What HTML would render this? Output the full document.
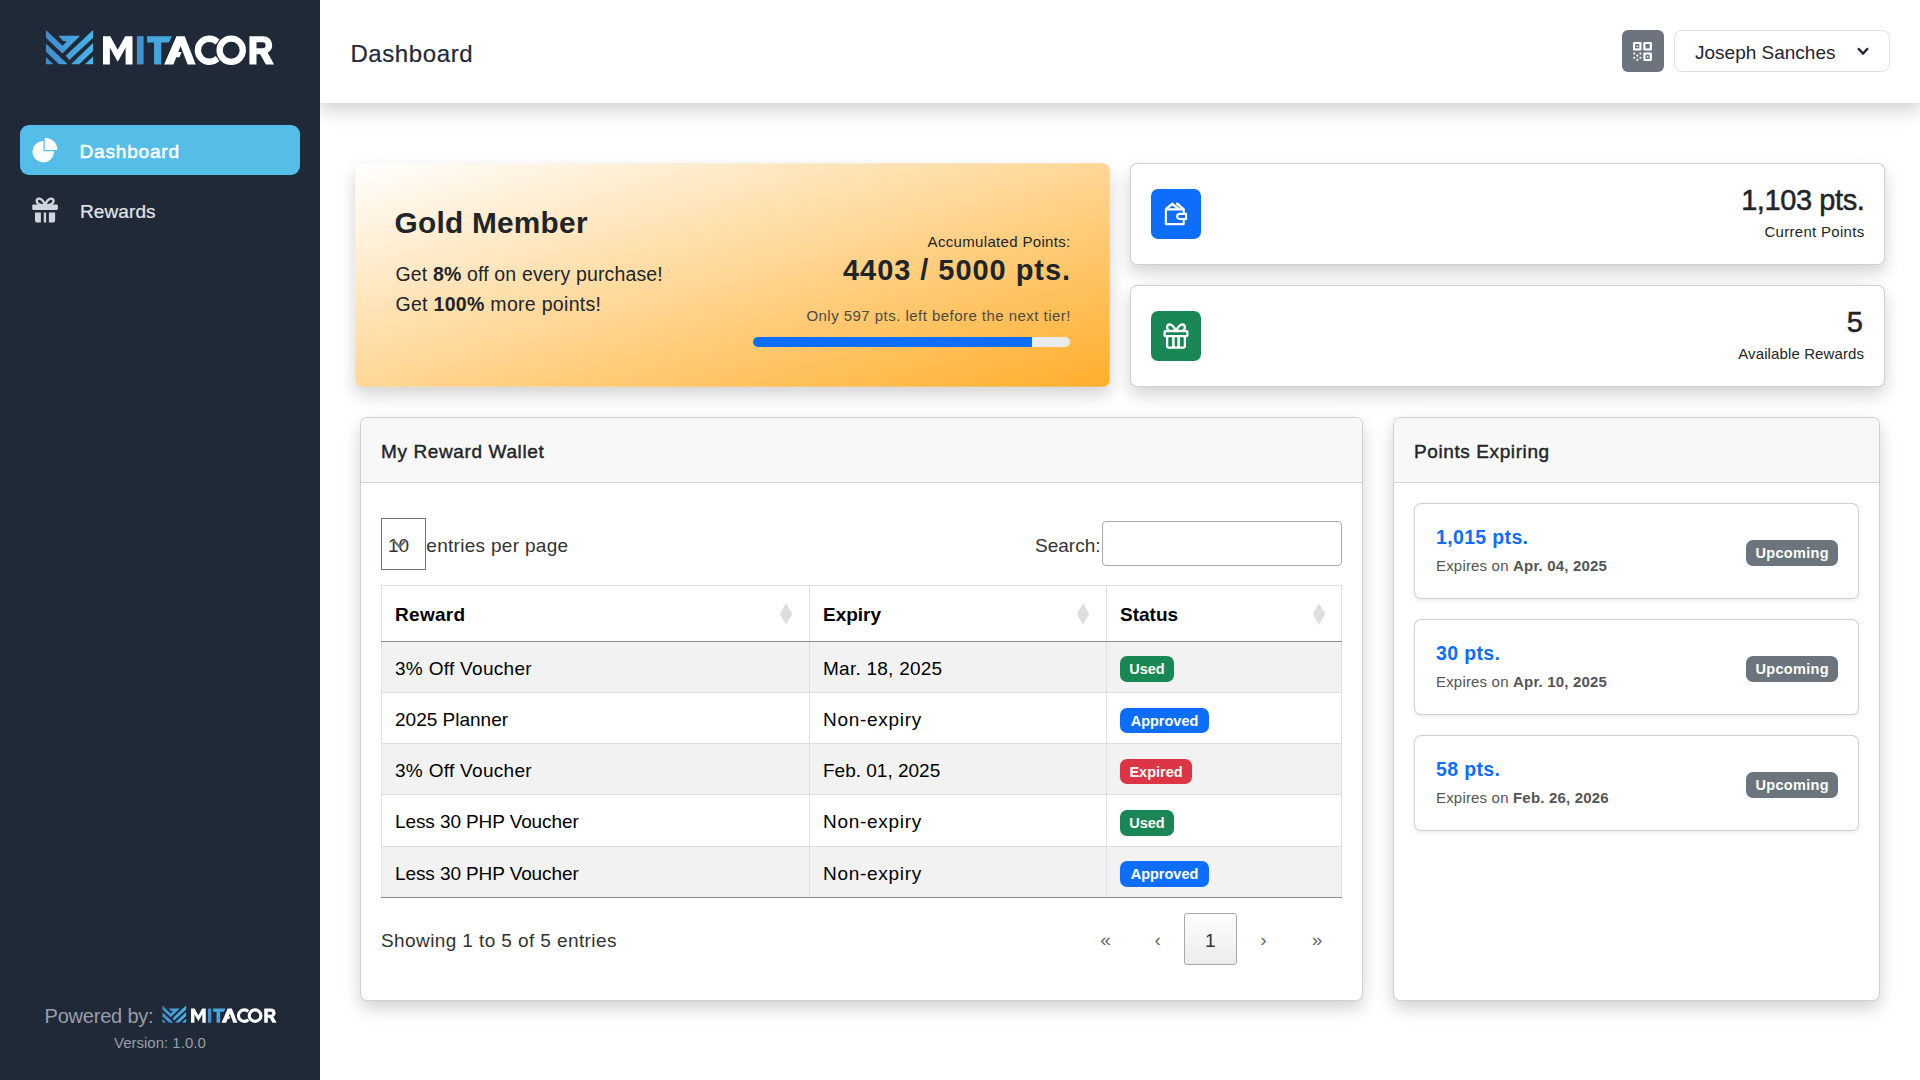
<!DOCTYPE html>
<html lang="en">
<head>
<meta charset="utf-8">
<title>Dashboard</title>
<style>
*{box-sizing:border-box;margin:0;padding:0}
html,body{width:1920px;height:1080px;overflow:hidden;background:#fff}
body{font-family:"Liberation Sans",sans-serif;color:#212529;position:relative}
.abs{position:absolute;z-index:2}
.t{position:absolute;white-space:nowrap;line-height:1;z-index:2}
b{font-weight:700}
/* sidebar */
#side{position:absolute;left:0;top:0;width:320px;height:1080px;background:#1f2937;z-index:1}
#navact{z-index:2;position:absolute;left:20px;top:125px;width:280px;height:50px;border-radius:9px;background:#55bee8}
/* header */
#hdr{position:absolute;left:320px;top:0;width:1600px;height:103px;background:#fff;box-shadow:0 8px 16px rgba(0,0,0,.14),0 8px 30px rgba(0,0,0,.04)}
#qr{position:absolute;left:1622px;top:30px;width:42px;height:42px;border-radius:6px;background:#6c757d}
#user{position:absolute;left:1674px;top:30px;width:216px;height:42px;border-radius:8px;border:1px solid #dee0e8;background:#fff}
/* cards */
.card{position:absolute;background:#fff;border-radius:6px;overflow:hidden;box-shadow:0 0 0 1px #cfcfcf,0 8px 16px 1px rgba(0,0,0,.14),0 8px 30px 1px rgba(0,0,0,.04)}
.chead{position:absolute;left:0;top:0;right:0;height:65px;background:#f8f8f8;border-bottom:1px solid #d2d2d2}
#gold{position:absolute;left:355px;top:163px;width:755px;height:224px;border-radius:7px;border:1px solid rgba(233,239,248,.28);
 background:linear-gradient(to bottom right,#ffffff 0%,#ffae2b 100%);background-origin:border-box;box-shadow:0 8px 16px rgba(0,0,0,.14),0 8px 30px rgba(0,0,0,.04)}
.ibox{position:absolute;width:50px;height:50px;border-radius:7px}
.badge{z-index:3;position:absolute;height:25.6px;border-radius:7px;color:#fff;font-weight:700;font-size:14.5px;line-height:26.3px;text-align:center;white-space:nowrap}
.bg-g{background:#198754}.bg-b{background:#0d6efd}.bg-r{background:#dc3545}.bg-s{background:#6c757d}
.row{z-index:2;position:absolute;left:381px;width:961px;height:51px;border-bottom:1px solid #dee0e6}
.odd{background:#f2f2f2}
.vl{position:absolute;top:585px;width:1px;height:313px;background:#dee0e6;z-index:2}
.inner{position:absolute;left:1415px;width:443px;height:94px;border-radius:6px;background:#fff;box-shadow:0 0 0 1px #d0d0d0,0 2px 4px 1px rgba(0,0,0,.075)}
.dia{position:absolute;width:10px;height:24px}
</style>
</head>
<body>
<!-- SIDEBAR -->
<div id="side"></div>
<div id="navact"></div>
<svg width="0" height="0" style="position:absolute"><defs>
<linearGradient id="lg" x1="133" y1="0" x2="1195" y2="0" gradientUnits="userSpaceOnUse"><stop offset="0" stop-color="#3f8ccd"/><stop offset="1" stop-color="#49b5ea"/></linearGradient>
<symbol id="logo" viewBox="45 29 230 37">
<g transform="translate(40,24) scale(0.044444)" fill="url(#lg)">
<polygon points="133,135 505,490 605,392 520,385 415,265 905,265 505,665 133,310"/>
<polygon points="133,440 612,893 600,905 430,905 133,622"/>
<polygon points="133,740 300,905 133,905"/>
<polygon points="575,715 1195,135 1195,310 660,810"/>
<polygon points="712,890 1195,430 1195,608 880,905 712,905"/>
<polygon points="1195,730 1195,905 1010,905"/>
</g>
<g transform="translate(98,28) scale(0.095833)">
<polygon fill="#fff" points="52,380 52,85 128,85 206,228 284,85 360,85 360,380 288,380 288,205 206,352 124,205 124,380"/>
<rect fill="#4190d0" x="406" y="85" width="70" height="295"/>
<polygon fill="#45a6e0" points="512,85 772,85 740,152 660,152 660,380 585,380 585,152 512,152"/>
<polygon fill="#fff" points="690,380 818,85 905,85 1020,380 935,380 862,188 838,250 872,250 850,305 816,305 787,380"/>
<path fill="none" stroke="#fff" stroke-width="66" d="M1250,150 A120,120 0 1 0 1250,314"/>
<circle cx="1390" cy="232" r="166" fill="#1f2937"/>
<circle cx="1390" cy="232" r="121" fill="none" stroke="#fff" stroke-width="66"/>
<path fill="#fff" fill-rule="evenodd" d="M1580,85 H1725 a92,92 0 0 1 45,172 L1838,380 H1752 L1692,275 H1654 V380 H1580 Z M1654,150 V212 H1718 a31,31 0 0 0 0,-62 Z"/>
</g>
</symbol></defs></svg>
<svg class="abs" style="left:45px;top:29px" width="230" height="37"><use href="#logo"/></svg>
<svg class="abs" style="left:161.9px;top:1005.4px" width="115" height="18.5"><use href="#logo"/></svg>

<div class="t" id="n1" style="left:79.6px;top:142px;letter-spacing:.8px;font-size:19px;color:#fff;-webkit-text-stroke:.55px #fff">Dashboard</div>
<div class="t" id="n2" style="left:80px;top:201.7px;letter-spacing:.1px;font-size:19px;color:#e3e4ea;-webkit-text-stroke:.2px #e3e4ea">Rewards</div>
<div class="t" id="pw" style="left:44.5px;top:1005.6px;font-size:20px;letter-spacing:-.2px;color:#9a9ea8">Powered by:</div>
<div class="t" id="ver" style="left:114px;top:1035px;font-size:15px;color:#9a9ea8">Version: 1.0.0</div>

<!-- HEADER -->
<div id="hdr"></div>
<div class="t" id="ttl" style="left:350.4px;top:42px;font-size:24px;letter-spacing:.6px;-webkit-text-stroke:.2px #1f2937;color:#1f2937">Dashboard</div>
<div id="qr"></div>
<div id="user"></div>
<div class="t" id="uname" style="left:1695px;top:42.7px;font-size:19px;color:#1f2433">Joseph Sanches</div>


<!-- nav icons -->
<svg class="abs" style="left:30px;top:135px" width="30" height="30" viewBox="30 135 30 30"><path fill="#fff" d="M43.5,151.2 V140.95 A10.7,10.7 0 1 0 53.95,151.2 Z"/><path fill="#fff" d="M44.75,149.9 V137.8 A12.6,12.1 0 0 1 57.4,149.9 Z"/></svg>
<svg class="abs" style="left:30px;top:195px" width="30" height="30" viewBox="30 195 30 30"><g transform="translate(20,120) scale(0.11111)" fill="#d2d4dd">
<rect x="110" y="761" width="231" height="48" rx="10"/>
<path d="M135,832 H188 V923 H153 a18,18 0 0 1 -18,-18 Z"/><rect x="214" y="832" width="21" height="91"/><path d="M260,832 H316 V905 a18,18 0 0 1 -18,18 H260 Z"/>
<path fill="none" stroke="#d2d4dd" stroke-width="22" d="M226,770 C208,702 152,692 150,728 C149,758 190,766 226,770 Z M226,770 C244,702 300,692 302,728 C303,758 262,766 226,770 Z"/>
</g></svg>
<!-- qr -->
<svg class="abs" style="left:1622px;top:30px" width="42" height="42" viewBox="1622 30 42 42"><g fill="#fff">
<rect x="1633" y="41.9" width="8.5" height="8.6" rx="1.3"/><rect x="1643.3" y="41.9" width="8.6" height="8.6" rx="1.3"/><rect x="1643.3" y="52.5" width="8.6" height="8.6" rx="1.3"/>
<circle cx="1634.2" cy="53.6" r="1.05"/><circle cx="1640.4" cy="53.6" r="1.05"/><circle cx="1637.3" cy="55.7" r="1.1"/><circle cx="1634.2" cy="57.8" r="1.05"/><circle cx="1640.4" cy="57.8" r="1.05"/><circle cx="1637.3" cy="59.8" r="1.1"/></g>
<g fill="#6c757d"><rect x="1635.1" y="44" width="4.2" height="4.4"/><rect x="1645.5" y="44" width="4.2" height="4.4"/><rect x="1645.5" y="54.6" width="4.2" height="4.4"/></g>
<g fill="#fff"><circle cx="1637.3" cy="46.3" r=".8"/><circle cx="1647.7" cy="56.9" r=".8"/></g></svg>
<!-- chevron -->
<svg class="abs" style="left:1855px;top:44px" width="16" height="14" viewBox="1855 44 16 14"><path fill="none" stroke="#1f2433" stroke-width="2.4" d="M1858,48.3 L1863,53.6 L1868,48.3"/></svg>
<!-- wallet -->
<svg class="abs" style="left:1151px;top:189px" width="50" height="50" viewBox="0 0 50 50"><g fill="none" stroke="#fff" stroke-width="2.15" stroke-linejoin="round" stroke-linecap="round">
<path d="M32.7,24.6 V20.4 H14.9 V35.1 H32.7 V30.4"/>
<path d="M28.7,24.9 H35.1 V30 H28.7 a2.55,2.55 0 0 1 0,-5.1 Z"/>
<path stroke-width="2.5" d="M15.4,19.8 L21.3,14.9 L27.2,19.8 M26.2,14.8 L32.2,19.9"/></g></svg>
<!-- gift outline -->
<svg class="abs" style="left:1151px;top:311px" width="50" height="50" viewBox="0 0 50 50"><g fill="none" stroke="#fff" stroke-width="2.3" stroke-linejoin="round">
<rect x="13.6" y="20.1" width="22.8" height="5" rx=".8"/>
<path d="M16.1,25.1 V35.3 a1.3,1.3 0 0 0 1.3,1.3 H32.6 a1.3,1.3 0 0 0 1.3,-1.3 V25.1"/>
<path stroke-width="2.6" d="M22.4,25.1 V36.6 M27.6,25.1 V36.6"/>
<path d="M24.8,19.9 C23.6,16.2 20.6,13.3 18.4,13.5 C15.5,13.8 15.3,18.6 18.2,19.9 Z"/>
<path d="M25.2,19.9 C26.4,16.2 29.4,13.3 31.6,13.5 C34.5,13.8 34.7,18.6 31.8,19.9 Z"/></g></svg>

<!-- GOLD -->
<div id="gold"></div>
<div class="t" id="gm" style="left:394.6px;top:207.7px;font-size:29.8px;font-weight:700;letter-spacing:.25px">Gold Member</div>
<div class="t" id="g1" style="left:395.5px;top:264.75px;font-size:19.5px;letter-spacing:.15px">Get <b>8%</b> off on every purchase!</div>
<div class="t" id="g2" style="left:395.5px;top:294.8px;font-size:19.5px;letter-spacing:.3px">Get <b>100%</b> more points!</div>
<div class="t" id="ap" style="right:849.4px;top:234px;font-size:15px;letter-spacing:.33px">Accumulated Points:</div>
<div class="t" id="pts" style="right:849px;top:255.8px;font-size:29px;font-weight:700;letter-spacing:.95px">4403 / 5000 pts.</div>
<div class="t" id="only" style="right:849.2px;top:308px;font-size:15px;letter-spacing:.46px;color:#4e4a44">Only 597 pts. left before the next tier!</div>
<div class="abs" style="left:753px;top:337px;width:317px;height:10px;border-radius:5px;background:#e9ecef;overflow:hidden"><div style="width:279px;height:10px;background:#0d6efd"></div></div>

<!-- STAT CARDS -->
<div class="card" style="left:1131px;top:164px;width:753px;height:100px"></div>
<div class="card" style="left:1131px;top:286px;width:753px;height:100px"></div>
<div class="ibox" style="left:1151px;top:189px;background:#0d6efd"></div>
<div class="ibox" style="left:1151px;top:311px;background:#198754"></div>
<div class="t" id="s1" style="right:55.5px;top:186.3px;font-size:29px;letter-spacing:-.4px;-webkit-text-stroke:.5px #212529">1,103 pts.</div>
<div class="t" id="s1l" style="right:55.5px;top:223.5px;font-size:15px;letter-spacing:.3px">Current Points</div>
<div class="t" id="s2" style="right:57px;top:308.4px;font-size:29px;-webkit-text-stroke:.5px #212529">5</div>
<div class="t" id="s2l" style="right:55.8px;top:345.5px;font-size:15px;letter-spacing:.12px">Available Rewards</div>

<!-- WALLET CARD -->
<div class="card" style="left:361px;top:418px;width:1001px;height:582px"><div class="chead"></div></div>
<div class="t" id="wt" style="left:381px;top:441.7px;font-size:19px;letter-spacing:.62px;-webkit-text-stroke:.42px #212529">My Reward Wallet</div>
<div class="abs" style="left:381px;top:518px;width:45px;height:52px;border:1px solid #6b7280;background:#fff"></div>
<div class="t" id="ten" style="left:388px;top:536px;font-size:19px;color:#333">10</div>
<div class="t" id="epp" style="left:426.3px;top:536px;font-size:19px;letter-spacing:.3px;color:#333">entries per page</div>
<div class="t" id="srch" style="left:1035px;top:535.6px;font-size:19px;color:#333">Search:</div>
<div class="abs" style="left:1102px;top:521px;width:240px;height:45px;border:1px solid #aaa;border-radius:4px;background:#fff"></div>

<div class="abs" style="left:381px;top:585px;width:961px;height:57px;border-top:1px solid #dee0e6"></div>
<div class="row odd" style="top:642px"></div>
<div class="row" style="top:693px"></div>
<div class="row odd" style="top:744px"></div>
<div class="row" style="top:795px;height:52px"></div>
<div class="row odd" style="top:847px;height:51px;border-bottom:0"></div>
<div class="vl" style="left:381px"></div><div class="vl" style="left:809px"></div><div class="vl" style="left:1106px"></div><div class="vl" style="left:1341px"></div>
<div class="abs" style="left:381px;top:641px;width:961px;height:1px;background:#8c8c8c;z-index:3"></div><div class="abs" style="left:381px;top:897px;width:961px;height:1px;background:#8c8c8c;z-index:3"></div>

<svg class="abs" style="left:778.25px;top:600px" width="16" height="28" viewBox="-8 -14 16 28"><polygon fill="#dedede" points="0,-10.7 6.25,0 0,10.7 -6.25,0"/></svg>
<svg class="abs" style="left:1075.25px;top:600px" width="16" height="28" viewBox="-8 -14 16 28"><polygon fill="#dedede" points="0,-10.7 6.25,0 0,10.7 -6.25,0"/></svg>
<svg class="abs" style="left:1310.5px;top:600px" width="16" height="28" viewBox="-8 -14 16 28"><polygon fill="#dedede" points="0,-10.7 6.25,0 0,10.7 -6.25,0"/></svg>
<svg class="abs" style="left:391px;top:537px" width="18" height="14" viewBox="391 537 18 14"><path fill="none" stroke="#6b7280" stroke-width="2" d="M393.3,540 L399.6,547 L406,540"/></svg>
<div class="t" style="left:395px;top:604.5px;font-size:19px;font-weight:700;color:#000;letter-spacing:.3px">Reward</div>
<div class="t" style="left:823px;top:604.5px;font-size:19px;font-weight:700;color:#000">Expiry</div>
<div class="t" style="left:1120px;top:604.5px;font-size:19px;font-weight:700;color:#000">Status</div>

<div class="t" style="left:395px;top:658.9px;font-size:19px;color:#000;letter-spacing:.3px">3% Off Voucher</div>
<div class="t" style="left:395px;top:709.9px;font-size:19px;color:#000">2025 Planner</div>
<div class="t" style="left:395px;top:760.9px;font-size:19px;color:#000;letter-spacing:.3px">3% Off Voucher</div>
<div class="t" style="left:395px;top:811.7px;font-size:19px;color:#000;letter-spacing:-.1px">Less 30 PHP Voucher</div>
<div class="t" style="left:395px;top:863.9px;font-size:19px;color:#000;letter-spacing:-.1px">Less 30 PHP Voucher</div>
<div class="t" style="left:823px;top:658.9px;font-size:19px;color:#000;letter-spacing:.25px">Mar. 18, 2025</div>
<div class="t" style="left:823px;top:709.9px;font-size:19px;color:#000;letter-spacing:.7px">Non-expiry</div>
<div class="t" style="left:823px;top:760.9px;font-size:19px;color:#000">Feb. 01, 2025</div>
<div class="t" style="left:823px;top:811.7px;font-size:19px;color:#000;letter-spacing:.7px">Non-expiry</div>
<div class="t" style="left:823px;top:863.9px;font-size:19px;color:#000;letter-spacing:.7px">Non-expiry</div>

<div class="badge bg-g" style="left:1120px;top:656.1px;width:54px">Used</div>
<div class="badge bg-b" style="left:1120px;top:707.6px;width:89px">Approved</div>
<div class="badge bg-r" style="left:1120px;top:758.6px;width:72px">Expired</div>
<div class="badge bg-g" style="left:1120px;top:810.1px;width:54px">Used</div>
<div class="badge bg-b" style="left:1120px;top:861.4px;width:89px">Approved</div>

<div class="t" id="show" style="left:381px;top:930.6px;font-size:19px;letter-spacing:.4px;color:#333">Showing 1 to 5 of 5 entries</div>
<div class="abs" style="left:1184px;top:913px;width:53px;height:52px;border:1px solid #a9a9a9;border-radius:3px;background:linear-gradient(#fdfdfd,#ececec)"></div>
<div class="t" style="left:1205px;top:930.6px;font-size:19px;color:#333">1</div>
<div class="t" style="left:1100.3px;top:929.6px;font-size:19px;color:#666">«</div>
<div class="t" style="left:1154.5px;top:929.6px;font-size:19px;color:#666">‹</div>
<div class="t" style="left:1260.3px;top:929.6px;font-size:19px;color:#666">›</div>
<div class="t" style="left:1311.8px;top:929.6px;font-size:19px;color:#666">»</div>

<!-- POINTS EXPIRING -->
<div class="card" style="left:1394px;top:418px;width:485px;height:582px"><div class="chead"></div></div>
<div class="t" id="pe" style="left:1414px;top:441.6px;font-size:19px;letter-spacing:.6px;-webkit-text-stroke:.42px #212529">Points Expiring</div>
<div class="inner" style="top:504px"></div>
<div class="inner" style="top:620px"></div>
<div class="inner" style="top:736px"></div>
<div class="t" style="left:1436px;top:527.6px;font-size:19.5px;font-weight:700;color:#0d6efd;letter-spacing:.35px">1,015 pts.</div>
<div class="t" style="left:1436px;top:643.6px;font-size:19.5px;font-weight:700;color:#0d6efd;letter-spacing:.35px">30 pts.</div>
<div class="t" style="left:1436px;top:759.6px;font-size:19.5px;font-weight:700;color:#0d6efd;letter-spacing:.35px">58 pts.</div>
<div class="t" style="left:1436px;top:558px;font-size:15px;color:#555;letter-spacing:.18px">Expires on <b>Apr. 04, 2025</b></div>
<div class="t" style="left:1436px;top:674px;font-size:15px;color:#555;letter-spacing:.18px">Expires on <b>Apr. 10, 2025</b></div>
<div class="t" style="left:1436px;top:790px;font-size:15px;color:#555;letter-spacing:.18px">Expires on <b>Feb. 26, 2026</b></div>
<div class="badge bg-s" style="left:1746px;top:540px;width:92px;height:26px;letter-spacing:.3px;text-indent:.3px">Upcoming</div>
<div class="badge bg-s" style="left:1746px;top:656px;width:92px;height:26px;letter-spacing:.3px;text-indent:.3px">Upcoming</div>
<div class="badge bg-s" style="left:1746px;top:772px;width:92px;height:26px;letter-spacing:.3px;text-indent:.3px">Upcoming</div>
</body>
</html>
